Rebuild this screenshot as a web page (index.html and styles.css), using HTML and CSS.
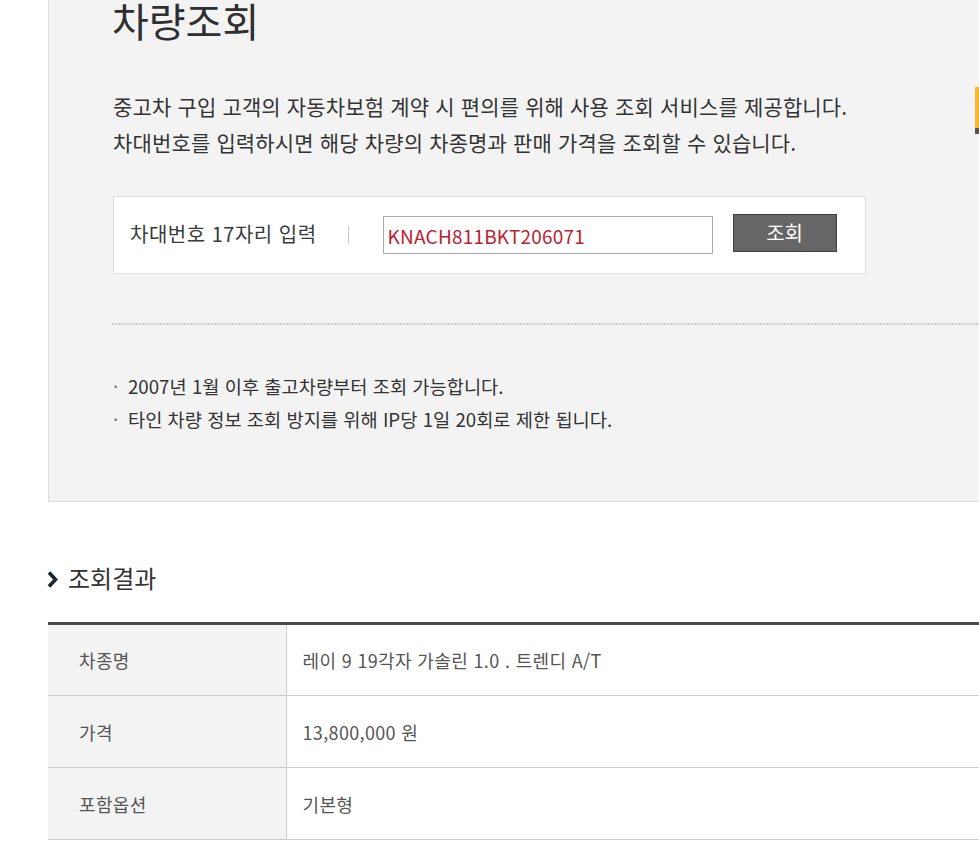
FILE: index.html
```html
<!DOCTYPE html>
<html lang="ko">
<head>
<meta charset="utf-8">
<title>차량조회</title>
<link rel="stylesheet" href="styles.css">
</head>
<body>
<div class="panel">
  <h1 class="title">차량조회</h1>
  <p class="desc">중고차 구입 고객의 자동차보험 계약 시 편의를 위해 사용 조회 서비스를 제공합니다.<br>차대번호를 입력하시면 해당 차량의 차종명과 판매 가격을 조회할 수 있습니다.</p>
  <div class="search">
    <span class="label">차대번호 17자리 입력</span>
    <span class="sep"></span>
    <input class="vin" type="text" value="KNACH811BKT206071">
    <button class="btn" type="button">조회</button>
  </div>
  <div class="dots"></div>
  <ul class="notes">
    <li>2007년 1월 이후 출고차량부터 조회 가능합니다.</li>
    <li>타인 차량 정보 조회 방지를 위해 IP당 1일 20회로 제한 됩니다.</li>
  </ul>
</div>
<div class="banner"></div>
<h2 class="result-title"><svg class="chev" width="11" height="19" viewBox="0 0 11 19"><polyline points="2,2.5 8.5,9.5 2,16.5" fill="none" stroke="#1b2433" stroke-width="3.6" stroke-linejoin="miter"/></svg><span>조회결과</span></h2>
<table class="result">
  <tr><th>차종명</th><td>레이 9 19각자 가솔린 1.0 . 트렌디 A/T</td></tr>
  <tr><th>가격</th><td>13,800,000 원</td></tr>
  <tr><th>포함옵션</th><td>기본형</td></tr>
</table>
</body>
</html>
```
FILE: styles.css
```css
html, body {
  margin: 0;
  padding: 0;
  overflow: hidden;
  background: #fff;
}
body {
  font-family: "Noto Sans CJK KR", "Noto Sans", sans-serif;
  color: #333;
  width: 979px;
  height: 856px;
  position: relative;
}
.panel {
  margin-left: 48px;
  width: 1000px;
  background: #f3f3f3;
  border-left: 1px solid #dcdcdc;
  border-bottom: 1px solid #dcdcdc;
  padding: 0 0 66px 64px;
  box-sizing: border-box;
}
.title {
  margin: -2px 0 0 -1px;
  font-size: 40px;
  line-height: 44px;
  font-weight: 400;
  color: #2f2f2f;
}
.desc {
  margin: 46px 0 0;
  font-size: 21px;
  line-height: 36px;
  letter-spacing: 0.15px;
  color: #333;
}
.search {
  margin-top: 36px;
  width: 753px;
  height: 78px;
  box-sizing: border-box;
  background: #fff;
  border: 1px solid #dedede;
  display: flex;
  align-items: center;
  padding-left: 16px;
}
.label {
  font-size: 20px;
  line-height: 38px;
  letter-spacing: 0.5px;
  color: #3a3a3a;
  margin-top: -3px;
}
.sep {
  width: 1px;
  height: 18px;
  background: #c8c8c8;
  margin-left: 31px;
  margin-top: -1px;
}
.vin {
  margin: 0 0 0 34px;
  width: 330px;
  height: 38px;
  box-sizing: border-box;
  border: 1px solid #aaa;
  padding: 0 0 0 4px;
  font-family: "Noto Sans CJK KR", "Noto Sans", sans-serif;
  font-size: 19px;
  letter-spacing: 0.2px;
  color: #b8232f;
  background: #fff;
  outline: none;
}
.btn {
  margin: 0 0 5px 20px;
  width: 104px;
  height: 38px;
  box-sizing: border-box;
  background: #666;
  border: 1px solid #3f3f3f;
  color: #fff;
  font-family: "Noto Sans CJK KR", "Noto Sans", sans-serif;
  font-size: 20px;
  padding: 0;
}
.dots {
  margin: 49px 0 0 -1px;
  height: 2px;
  background-image: linear-gradient(to right, #cdcdcd 2px, transparent 2px);
  background-size: 3px 2px;
}
.notes {
  list-style: none;
  margin: 44px 0 0;
  padding: 0;
}
.notes li {
  font-size: 18.7px;
  line-height: 33px;
  color: #333;
}
.notes li::before {
  content: "·";
  display: inline-block;
  width: 15px;
  color: #777;
}
.banner {
  position: absolute;
  left: 975px;
  top: 87px;
  width: 20px;
  height: 41px;
  background: #f6b733;
  border-bottom: 6px solid #555;
  box-sizing: content-box;
}
.result-title {
  margin: 61px 0 0 47px;
  font-size: 24px;
  line-height: 30px;
  font-weight: 400;
  color: #333;
  display: flex;
  align-items: center;
}
.chev {
  margin-right: 10px;
  margin-top: 3px;
}
.result {
  margin: 29px 0 0 48px;
  width: 1000px;
  border-collapse: collapse;
  border-top: 3px solid #4c4c4c;
}
.result th,
.result td {
  height: 72px;
  box-sizing: border-box;
  border-bottom: 1px solid #cdcdcd;
  font-size: 18px;
  letter-spacing: 0.35px;
  font-weight: 400;
  color: #555;
  text-align: left;
  vertical-align: middle;
  padding: 0;
}
.result th {
  width: 238px;
  background: #f3f3f3;
  border-right: 1px solid #cdcdcd;
  padding-left: 31px;
}
.result td {
  padding-left: 16px;
}
```
